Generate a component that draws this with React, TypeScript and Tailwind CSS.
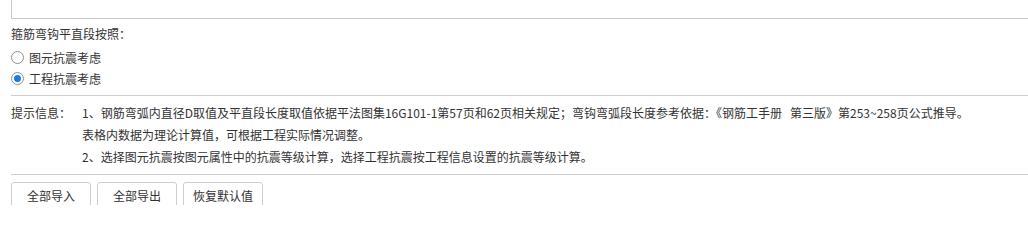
import React from "react";

const font = { fontFamily: '"Microsoft YaHei", "Noto Sans CJK SC", "Liberation Sans", sans-serif' };

function Radio({ checked, label }: { checked?: boolean; label: string }) {
  return (
    <label className="flex items-center h-[21px] cursor-pointer">
      <span className="w-[13px] h-[13px] rounded-full border border-[#8f8f8f] bg-white flex items-center justify-center mr-[5px]">
        {checked && <span className="w-[7px] h-[7px] rounded-full bg-[#1e7be6]" />}
      </span>
      <span>{label}</span>
    </label>
  );
}

export default function App() {
  return (
    <div className="w-[1028px] h-[205px] overflow-hidden bg-white text-[12px] text-[#333]" style={font}>
      <div className="ml-[11px] -mr-[10px] -mt-[20px] h-[39px] border border-[#c9c9c9]" />
      <div className="pl-[11px]">
        <div className="h-[20px] leading-[20px] mt-[5px]">箍筋弯钩平直段按照：</div>
        <div className="mt-[3px]">
          <Radio label="图元抗震考虑" />
          <Radio checked label="工程抗震考虑" />
        </div>
        <div className="mt-[6px] border-t border-[#cfcfcf] pt-[6px] flex">
          <div className="w-[71px] leading-[22px] shrink-0">提示信息：</div>
          <div className="leading-[22px]">
            <div>1、钢筋弯弧内直径D取值及平直段长度取值依据平法图集16G101-1第57页和62页相关规定；弯钩弯弧段长度参考依据：《钢筋工手册&nbsp;&nbsp;&nbsp;第三版》第253~258页公式推导。</div>
            <div>表格内数据为理论计算值，可根据工程实际情况调整。</div>
            <div>2、选择图元抗震按图元属性中的抗震等级计算，选择工程抗震按工程信息设置的抗震等级计算。</div>
          </div>
        </div>
        <div className="mt-[6px] border-t border-[#cfcfcf] pt-[7px] flex gap-[6px]">
          {["全部导入", "全部导出", "恢复默认值"].map((t) => (
            <button
              key={t}
              className="w-[80px] h-[28px] border border-[#cfcfcf] rounded-[3px] bg-white text-[#333] text-[12px] leading-[26px] text-center"
              style={font}
            >
              {t}
            </button>
          ))}
        </div>
      </div>
    </div>
  );
}
